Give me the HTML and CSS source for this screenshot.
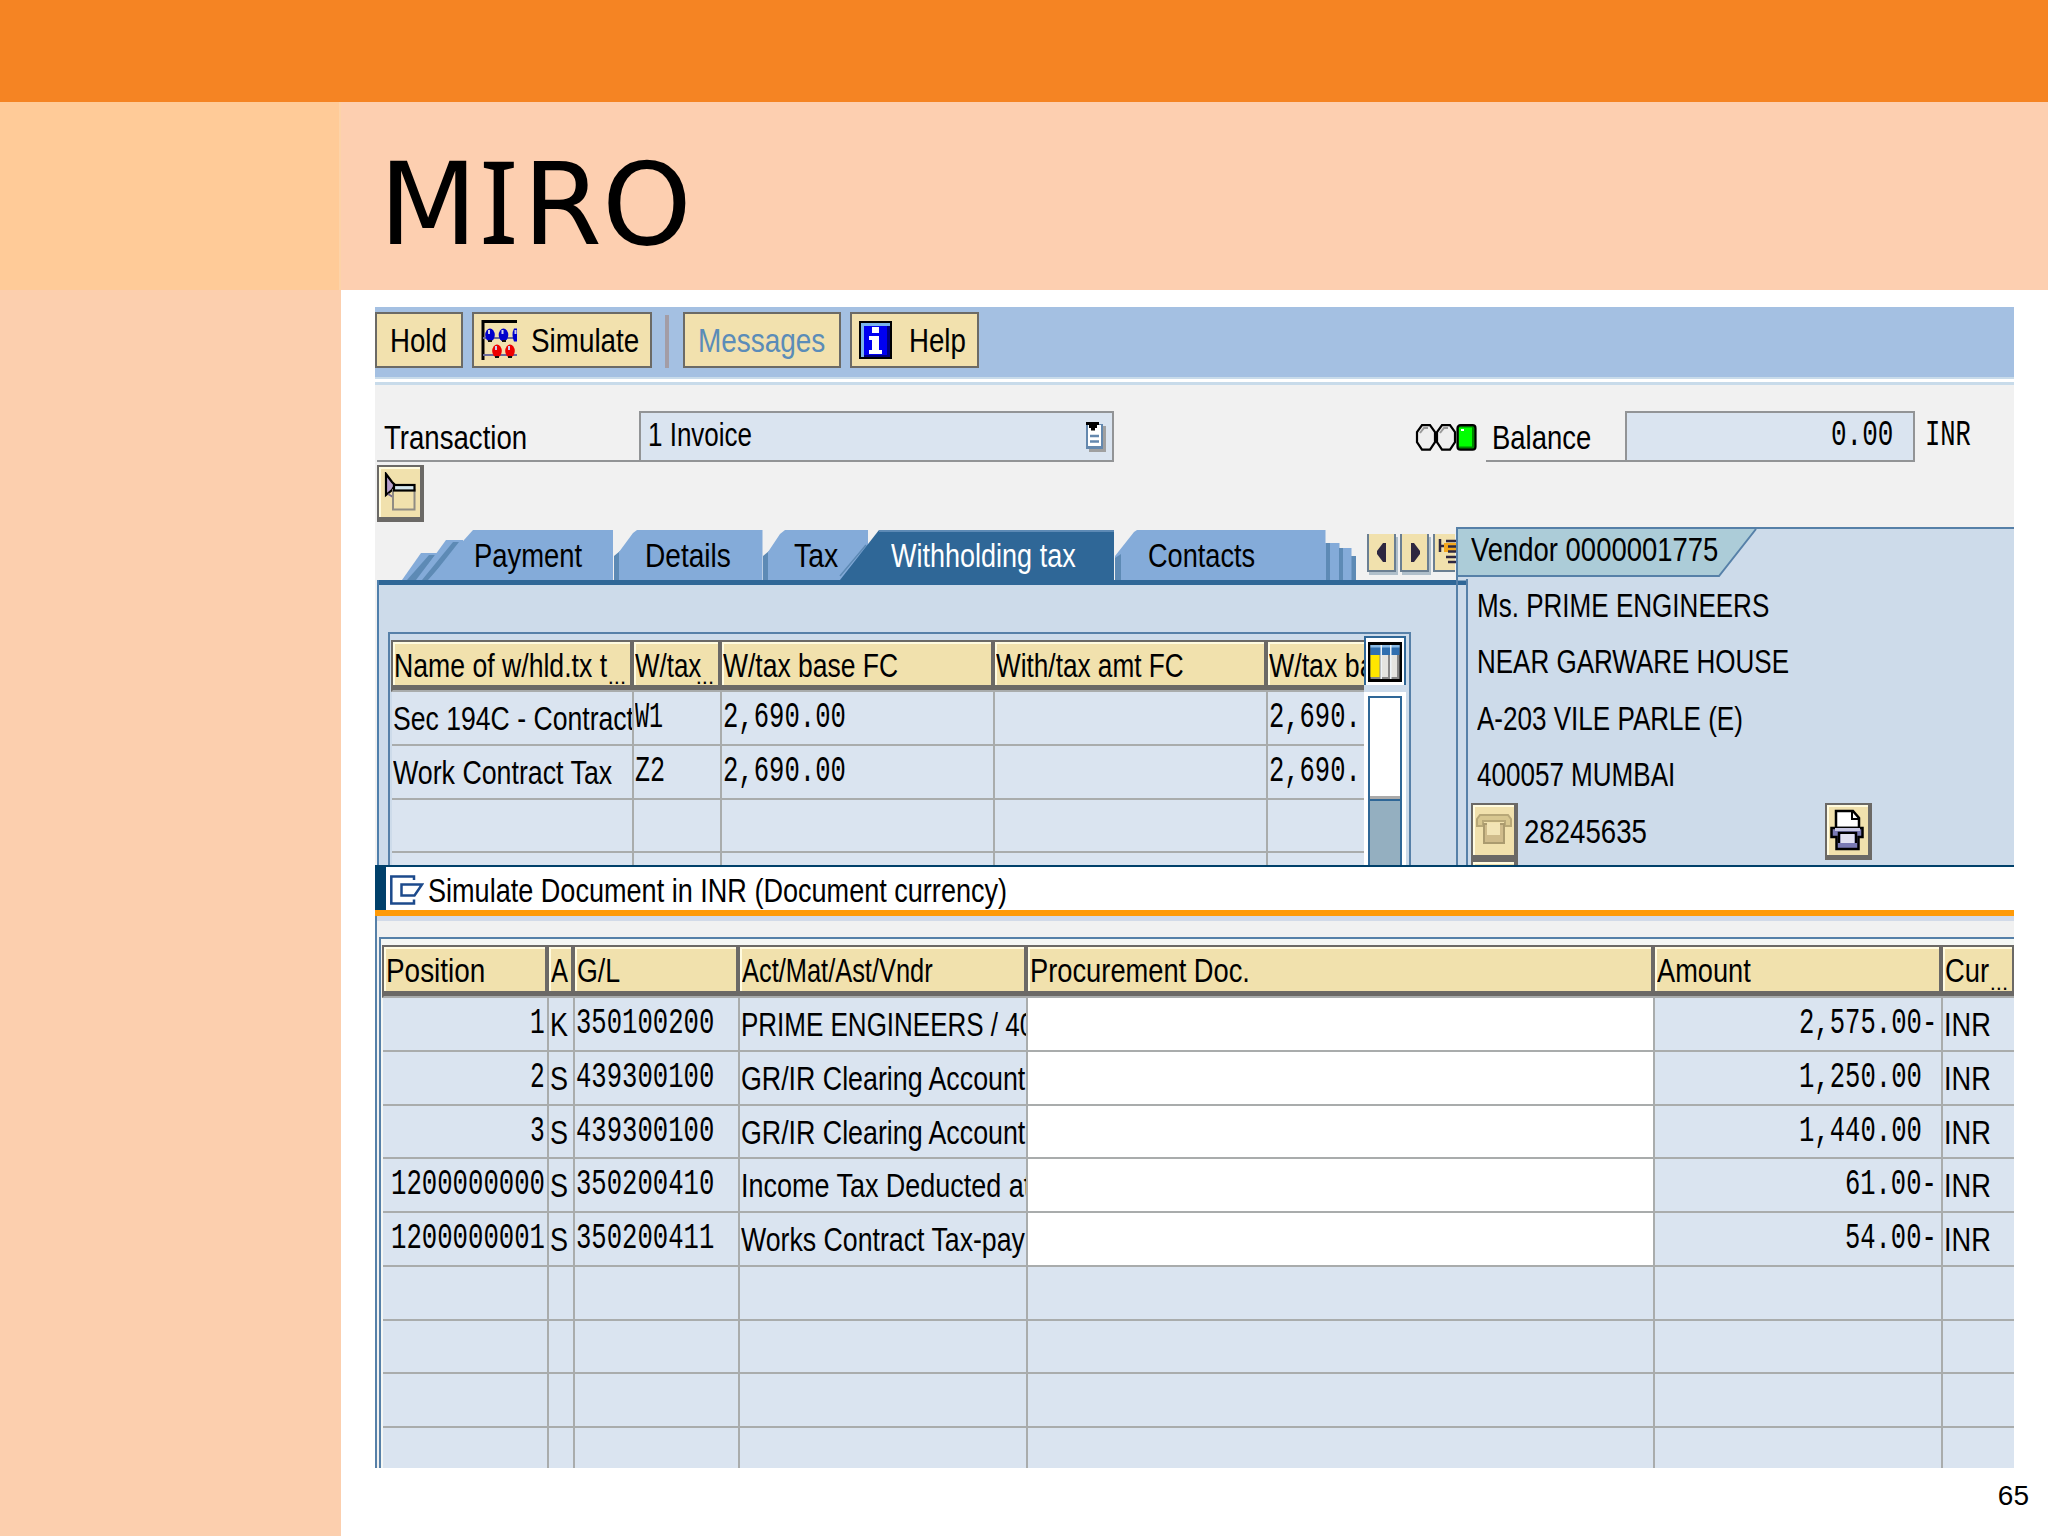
FILE: index.html
```html
<!DOCTYPE html>
<html lang="en">
<head>
  <meta charset="UTF-8" />
  <title>MIRO</title>
  <link rel="stylesheet" href="styles.css">
</head>
<body>
  <div class="slide">
    <div class="top-bar"></div>
    <aside class="side"><div class="side-top"></div></aside>
    <header class="title-band"><h1>M<span class="serif-i">I</span>RO</h1></header>

    <main class="content">
      <div class="app">
        <div class="toolbar">
          <button class="btn btn-hold"><span class="t" data-w="57">Hold</span></button>
          <button class="btn btn-simulate">
            <svg class="abacus" width="36" height="40" viewBox="0 0 36 40">
              <path d="M2 40V1.500H36" fill="none" stroke="#000" stroke-width="3"/>
              <path d="M2 18H36M2 35H36" stroke="#6a6a9a" stroke-width="2"/>
              <g fill="#00c"><ellipse cx="9" cy="15" rx="4.800" ry="6.500"/><ellipse cx="22.500" cy="15" rx="4.800" ry="6.500"/><path d="M36 8.500h-3q-3 6 0 13h3z"/></g>
              <g fill="#e00"><ellipse cx="16" cy="31" rx="4.800" ry="6.500"/><ellipse cx="29" cy="31" rx="4.800" ry="6.500"/></g>
              <path d="M7 10h2v4h-2zM20.500 10h2v4h-2zM33.500 10h2v4h-2zM14 26h2v4h-2zM27 26h2v4h-2z" fill="#cce"/>
              <path d="M7 20h4v2h-4zM21 20h4v2h-4zM14 36h4v2h-4zM27 36h4v2h-4z" fill="#111"/>
            </svg>
            <span class="t" data-w="108">Simulate</span>
          </button>
          <span class="sep"></span>
          <button class="btn btn-messages"><span class="t" data-w="127">Messages</span></button>
          <button class="btn btn-help">
            <svg width="33" height="38" viewBox="0 0 33 38">
              <path d="M0 0h33v38h-33z" fill="#000"/>
              <path d="M2 2h29v4h-25v30h-4z" fill="#7ab4ea"/>
              <path d="M5 5h23v29h-23z" fill="#0000f0"/>
              <path d="M28 5h3v31h-26v-2h23z" fill="#000080"/>
              <path d="M13 6h7v6h-7zM10 15h10v14h3v4h-13v-4h3v-10h-3z" fill="#fff"/>
            </svg>
            <span class="t" data-w="57">Help</span>
          </button>
        </div>

        <div class="form">
          <div class="field-row">
            <label class="lbl lbl-transaction"><span class="t" data-w="143">Transaction</span></label>
            <div class="field field-transaction">
              <span class="t" data-w="104">1 Invoice</span>
              <svg width="20" height="30" viewBox="0 0 20 30">
                <path d="M3 4h17v26h-17z" fill="#a0a0a0"/>
                <path d="M0 2h17v25h-17z" fill="#6488ae"/>
                <path d="M2 3h13v21h-13z" fill="#fff"/>
                <path d="M4 14h9M4 19.500h9" stroke="#6488ae" stroke-width="2.500"/>
                <path d="M0 0h13v3h-2v3h-2v2.500h-4v-2.500h-2v-3h-3z" fill="#000"/>
              </svg>
            </div>
            <svg class="lights" width="62" height="27" viewBox="0 0 62 27">
              <g fill="#eee" stroke="#000" stroke-width="2.200">
                <path d="M7 1.200h8l5 7v10l-5 7.500h-8l-5-7.500v-10z"/>
                <path d="M27 1.200h8l5 7v10l-5 7.500h-8l-5-7.500v-10z"/>
              </g>
              <path d="M5 9l4-5h4M25 9l4-5h4" fill="none" stroke="#999" stroke-width="2"/>
              <rect x="42.500" y="1.200" width="18" height="24.500" rx="3" fill="#080" stroke="#000" stroke-width="2.200"/>
              <path d="M44 3.500h13v19h-13z" fill="#0f0"/>
              <path d="M46 5h3v2h-3z" fill="#fff"/>
            </svg>
            <label class="lbl lbl-balance"><span class="t" data-w="99">Balance</span></label>
            <div class="field field-balance"><span class="m" data-w="62">0.00</span></div>
            <span class="m currency" data-w="46">INR</span>
          </div>
          <button class="icon-btn">
            <svg width="32" height="40" viewBox="0 0 32 40">
              <path d="M2 2l6 8 3 3-3 5-6 5z" fill="#b9a0cc" stroke="#000" stroke-width="2.200"/>
              <path d="M4 22l5 3v-7" fill="none" stroke="#76688e" stroke-width="2"/>
              <rect x="9" y="18" width="21.500" height="19.500" fill="none" stroke="#908c84" stroke-width="2"/>
              <rect x="10" y="13" width="20.500" height="5.500" fill="#d6e8f0" stroke="#000" stroke-width="2.200"/>
            </svg>
          </button>
        </div>

        <div class="middle">
          <section class="details">
            <div class="tabs">
              <svg class="tab-shapes" width="1081" height="53" viewBox="0 0 1081 53">
                <path d="M27 53L46 26H62V53z" fill="#84abd9"/>
                <path d="M32 53L54 28H60L41 53z" fill="#5d8ab5"/>
                <path d="M42 53L71 13H88V53z" fill="#84abd9"/>
                <path d="M47 53L78 15H84L54 53z" fill="#5d8ab5"/>
                <path d="M53 53L98 3H238V53z" fill="#84abd9"/>
                <path d="M239 53V29l6-5v29zM388 53V29l6-5v29z" fill="#5d8ab5"/>
                <path d="M244 53V25l14-19 4-3H387.500V53zM393 53V25l12-18 5-4H493V53z" fill="#84abd9"/>
                <path d="M465 49L491 18M467 53L494 20" stroke="#5d8ab5" stroke-width="1.500"/>
                <path d="M465 53L504 3H739V53z" fill="#2f6797"/>
                <path d="M504 4H739" stroke="#5d8ab5" stroke-width="2"/>
                <path d="M740 29l19-24 3-2H950.500V16h14v5h12v8H981V53H746V31l-6 5z" fill="#84abd9"/>
                <path d="M740 53V31l6-4v26z" fill="#5d8ab5"/>
                <path d="M951 16h4v37h-4zM964 21h4v32h-4zM976.500 29h4.500v24h-4.500z" fill="#5d8ab5"/>
              </svg>
              <span class="tab tab-payment"><span class="t" data-w="108">Payment</span></span>
              <span class="tab tab-details"><span class="t" data-w="86">Details</span></span>
              <span class="tab tab-tax"><span class="t" data-w="44">Tax</span></span>
              <span class="tab tab-wht"><span class="t" data-w="185">Withholding tax</span></span>
              <span class="tab tab-contacts"><span class="t" data-w="107">Contacts</span></span>
              <div class="tab-nav">
                <i><svg width="26" height="36"><path d="M17 9v19h-3l-6-8v-3l6-8z" fill="#2e2740"/></svg></i>
                <i><svg width="26" height="36"><path d="M9 9v19h3l6-8v-3l-6-8z" fill="#2e2740"/></svg></i>
                <i><svg width="21" height="36"><path d="M5 5v13M5 12h6" stroke="#2e2740" stroke-width="2.500"/><path d="M9 9h12v9h-12z" fill="#f5a81c"/><path d="M11 7h12M13 12.500h10M13 17.500h10M11 23h12M13 28h10" stroke="#2e2740" stroke-width="2.500"/></svg></i>
              </div>
            </div>
            <div class="panel">
              <div class="group">
                <div class="grid wht">
                  <div class="row head">
                    <div><span class="t" data-w="213">Name of w/hld.tx t</span><b>...</b></div>
                    <div><span class="t" data-w="66">W/tax</span><b>...</b></div>
                    <div><span class="t" data-w="175">W/tax base FC</span></div>
                    <div><span class="t" data-w="188">With/tax amt FC</span></div>
                    <div><span class="t" data-w="175">W/tax base LC</span></div>
                  </div>
                  <div class="row"><div><span class="t" data-w="241">Sec 194C - Contract</span></div><div><span class="m" data-w="28">W1</span></div><div><span class="m" data-w="123">2,690.00</span></div><div></div><div><span class="m" data-w="92">2,690.</span></div></div>
                  <div class="row"><div><span class="t" data-w="219">Work Contract Tax</span></div><div><span class="m" data-w="30">Z2</span></div><div><span class="m" data-w="123">2,690.00</span></div><div></div><div><span class="m" data-w="92">2,690.</span></div></div>
                  <div class="row"><div></div><div></div><div></div><div></div><div></div></div>
                  <div class="row"><div></div><div></div><div></div><div></div><div></div></div>
                </div>
                <div class="scroll-col">
                  <div class="config">
                    <svg width="34" height="40" viewBox="0 0 34 40">
                      <path d="M0 0h34v40h-34z" fill="#000"/>
                      <path d="M2.500 3h29v34h-29z" fill="#888"/>
                      <path d="M2.500 3h29v10h-29z" fill="#2f6fb0"/>
                      <path d="M2.500 3h29v2.500h-29z" fill="#8cbce6"/>
                      <path d="M2.500 13h9v22h-9z" fill="#ffe600"/>
                      <path d="M14 13h6v22h-6zM23 13h6v22h-6z" fill="#e4e4e0"/>
                      <path d="M12.500 3h1.500v34h-1.500zM22 3h1.500v34h-1.500z" fill="#eef4f8"/>
                    </svg>
                  </div>
                  <div class="scrollbar"><div class="thumb"></div></div>
                </div>
              </div>
            </div>
          </section>

          <section class="vendor">
            <div class="vendor-title">
              <svg width="305" height="60" viewBox="0 0 305 60"><path d="M0 53.500H8V58H0z" fill="#2f6797"/><path d="M0 2H298L261 48.500H0z" fill="#acccd8"/><path d="M0 49H261L298 2" fill="none" stroke="#5680a8" stroke-width="2"/></svg>
              <span class="t" data-w="247">Vendor 0000001775</span>
            </div>
            <div class="vendor-body">
              <p><span class="t" data-w="292">Ms. PRIME ENGINEERS</span></p>
              <p><span class="t" data-w="312">NEAR GARWARE HOUSE</span></p>
              <p><span class="t" data-w="266">A-203 VILE PARLE (E)</span></p>
              <p><span class="t" data-w="198">400057 MUMBAI</span></p>
              <div class="phone-row">
                <button class="icon-btn">
                  <svg width="36" height="40" viewBox="0 0 36 40">
                    <path d="M4 5h28l3 4v7h-6v-5h-22v5h-6v-7z" fill="#d8c790" stroke="#b8a878" stroke-width="2"/>
                    <path d="M8 14h20v19h-20z" fill="#cfbb8b" stroke="#ab9b6f" stroke-width="2"/>
                    <path d="M11 13h13v12h-13z" fill="#f2e4b6"/>
                  </svg>
                </button>
                <span class="t" data-w="123">28245635</span>
                <button class="icon-btn printer">
                  <svg width="36" height="44" viewBox="0 0 36 44">
                    <path d="M7 20V3h17l6 7v10z" fill="#fff" stroke="#000" stroke-width="2.500"/>
                    <path d="M23 3v8h7" fill="none" stroke="#000" stroke-width="2"/>
                    <path d="M2.500 20h31v9h-4v12h-22v-12h-5z" fill="#7a7ab4" stroke="#000" stroke-width="2.500"/>
                    <path d="M6 21.500h25" stroke="#c8c8e4" stroke-width="3"/>
                    <path d="M10 35V25h17v10" fill="none" stroke="#000" stroke-width="2.500"/>
                    <path d="M11.500 26h14v9h-14z" fill="#e2e2f2"/>
                  </svg>
                </button>
              </div>
              <div class="icon-btn next-btn"></div>
            </div>
          </section>
        </div>

        <div class="dialog-title">
          <svg width="34" height="30" viewBox="0 0 34 30">
            <path d="M24 5V1.500H1.300V28.500H24V24.500" fill="none" stroke="#1c4a8c" stroke-width="2.500"/>
            <path d="M11.500 9.500H32l-7.500 11H11.500z" fill="none" stroke="#1c4a8c" stroke-width="2.500"/>
          </svg>
          <span class="t" data-w="579">Simulate Document in INR (Document currency)</span>
        </div>

        <div class="dialog">
          <div class="grid sim">
            <div class="row head">
              <div><span class="t" data-w="99">Position</span></div>
              <div><span class="t" data-w="17">A</span></div>
              <div><span class="t" data-w="43">G/L</span></div>
              <div><span class="t" data-w="191">Act/Mat/Ast/Vndr</span></div>
              <div><span class="t" data-w="220">Procurement Doc.</span></div>
              <div><span class="t" data-w="94">Amount</span></div>
              <div><span class="t" data-w="44">Cur</span><b>...</b></div>
            </div>
            <div class="row item"><div><span class="m" data-w="15">1</span></div><div><span class="t" data-w="18">K</span></div><div><span class="m" data-w="138">350100200</span></div><div><span class="t" data-w="293">PRIME ENGINEERS / 40</span></div><div></div><div><span class="m" data-w="138">2,575.00-</span></div><div><span class="t" data-w="47">INR</span></div></div>
            <div class="row item"><div><span class="m" data-w="15">2</span></div><div><span class="t" data-w="18">S</span></div><div><span class="m" data-w="138">439300100</span></div><div><span class="t" data-w="284">GR/IR Clearing Account</span></div><div></div><div><span class="m" data-w="138">1,250.00 </span></div><div><span class="t" data-w="47">INR</span></div></div>
            <div class="row item"><div><span class="m" data-w="15">3</span></div><div><span class="t" data-w="18">S</span></div><div><span class="m" data-w="138">439300100</span></div><div><span class="t" data-w="284">GR/IR Clearing Account</span></div><div></div><div><span class="m" data-w="138">1,440.00 </span></div><div><span class="t" data-w="47">INR</span></div></div>
            <div class="row item"><div><span class="m" data-w="154">1200000000</span></div><div><span class="t" data-w="18">S</span></div><div><span class="m" data-w="138">350200410</span></div><div><span class="t" data-w="290">Income Tax Deducted at</span></div><div></div><div><span class="m" data-w="92">61.00-</span></div><div><span class="t" data-w="47">INR</span></div></div>
            <div class="row item"><div><span class="m" data-w="154">1200000001</span></div><div><span class="t" data-w="18">S</span></div><div><span class="m" data-w="138">350200411</span></div><div><span class="t" data-w="284">Works Contract Tax-pay</span></div><div></div><div><span class="m" data-w="92">54.00-</span></div><div><span class="t" data-w="47">INR</span></div></div>
            <div class="row"><div></div><div></div><div></div><div></div><div></div><div></div><div></div></div>
            <div class="row"><div></div><div></div><div></div><div></div><div></div><div></div><div></div></div>
            <div class="row"><div></div><div></div><div></div><div></div><div></div><div></div><div></div></div>
            <div class="row"><div></div><div></div><div></div><div></div><div></div><div></div><div></div></div>
          </div>
        </div>
      </div>
      <footer>65</footer>
    </main>
  </div>

  <script>
    // squeeze each label to its narrow GUI width
    document.querySelectorAll("[data-w]").forEach(el => {
      const natural = el.offsetWidth;
      const width = Number(el.dataset.w);
      el.style.transform = `scaleX(${width / natural})`;
      el.style.marginRight = (width - natural) + "px";
    });
  </script>
</body>
</html>
```
FILE: styles.css
```css
* {
  box-sizing: border-box;
}

body {
  margin: 0;
  background: #fff;
  font-family: "Liberation Sans", Arial, sans-serif;
  color: #000;
}

.slide {
  width: 2048px;
  height: 1536px;
  display: grid;
  grid-template-columns: 341px 1fr;
  grid-template-rows: 102px 188px 1fr;
  overflow: hidden;
}

.top-bar {
  grid-column: 1 / 3;
  background: #f58423;
}

.side {
  grid-row: 2 / 4;
  background: #fccfae;
}

.side-top {
  height: 188px;
  background: #ffcb98;
  border-right: 2px solid #fdd3a8;
}

.title-band {
  background: #fdcfb0;
  padding-left: 38px;
}

h1 {
  margin: 0;
  padding-top: 37px;
  font: 400 114px/132px "DejaVu Sans", Verdana, sans-serif;
}

.serif-i {
  font-family: "Noto Sans", sans-serif;
  font-size: 116px;
  line-height: 1px;
  margin: 0 4px 0 2px;
}

.content {
  padding: 17px 0 0 34px;
}

.app {
  width: 1639px;
  height: 1161px;
  overflow: hidden;
  background: #f1f1f1;
  display: flex;
  flex-direction: column;
}

/* text */
.t, .m {
  display: inline-block;
  flex: none;
  white-space: pre;
  transform-origin: 0 0;
  font-size: 33px;
  line-height: 37px;
}

.m {
  font-family: "Liberation Mono", monospace;
  font-size: 36px;
}

/* toolbar */
.toolbar {
  flex: none;
  height: 78px;
  display: flex;
  align-items: flex-start;
  padding-top: 5px;
  background: linear-gradient(#a4c0e2 70px, #c8dbea 70px 72px, #fff 72px 75px, #c8dbea 75px);
}

.btn {
  height: 56px;
  display: flex;
  align-items: center;
  padding: 0;
  border: 2px solid #6b6a66;
  background: #f2e1ae;
  color: #000;
  font-family: inherit;
}

.btn-hold {
  width: 88px;
  padding-left: 13px;
  margin-right: 9px;
}

.btn-simulate {
  width: 180px;
  padding-left: 7px;
}

.btn-simulate .t {
  margin-left: 14px;
}

.sep {
  width: 4px;
  height: 53px;
  margin: 3px 14px 0 13px;
  background: #a39da6;
}

.btn-messages {
  width: 158px;
  padding-left: 13px;
  margin-right: 9px;
  color: #5b8cb8;
}

.btn-help {
  width: 129px;
  padding-left: 7px;
}

.btn-help .t {
  margin-left: 17px;
}

/* header fields */
.form {
  flex: none;
  height: 142px;
  padding: 26px 0 0 2px;
}

.field-row {
  display: flex;
  height: 51px;
}

.lbl {
  border-bottom: 2px solid #929496;
  padding-top: 8px;
}

.lbl-transaction {
  width: 262px;
  padding-left: 7px;
}

.field {
  border: 2px solid #929496;
  background: #dae4f0;
  display: flex;
  padding-top: 3px;
}

.field-transaction {
  width: 475px;
  padding-left: 7px;
  justify-content: space-between;
  padding-right: 6px;
}

.field-transaction svg {
  margin-top: 6px;
}

.lights {
  margin: 13px 9px 0 301px;
}

.lbl-balance {
  width: 139px;
  padding-left: 6px;
}

.field-balance {
  width: 290px;
  padding-top: 4px;
  justify-content: flex-end;
  padding-right: 20px;
}

.currency {
  margin-left: 10px;
  margin-top: 6px;
}

.icon-btn {
  display: flex;
  align-items: center;
  justify-content: center;
  width: 47px;
  height: 57px;
  margin-top: 3px;
  padding: 0;
  border: solid #6b6966;
  border-width: 2px 4px 5px 2px;
  background: #f1e1ad;
  box-shadow: inset 2px 2px #fffbe0;
}

/* tabs */
.middle {
  flex: none;
  display: flex;
  height: 338px;
  overflow: hidden;
}

.details {
  width: 1081px;
}

.tabs {
  position: relative;
  height: 53px;
  display: flex;
}

.tab-shapes {
  position: absolute;
  left: 0;
  top: 0;
}

.tab {
  position: relative;
  padding-top: 10px;
}

.tab-payment {
  width: 171px;
  margin-left: 99px;
}

.tab-details {
  width: 149px;
}

.tab-tax {
  width: 97px;
}

.tab-wht {
  width: 257px;
  color: #fff;
}

.tab-contacts {
  width: 219px;
}

.tab-nav {
  display: flex;
  gap: 4px;
  margin-top: 7px;
}

.tab-nav i {
  width: 29px;
  height: 38px;
  background: #f1e1ad;
  border: solid #6b7f92;
  border-width: 0 2px 2px 2px;
  box-shadow: 2px 3px #b0bfca;
}

.tab-nav i:last-child {
  width: 22px;
  border-right: 0;
  box-shadow: none;
}

.panel {
  height: 285px;
  margin-left: 2px;
  border-left: 2px solid #4f7fac;
  background: linear-gradient(#2f6797 5px, #cddbea 5px);
  padding: 52px 0 0 9px;
}

.group {
  width: 1023px;
  height: 240px;
  border: solid #5680a8;
  border-width: 2px 2px 0 2px;
  display: flex;
  padding: 6px 0 0 1px;
}

/* tables */
.grid {
  overflow: hidden;
}

.row {
  display: grid;
  height: 53.75px;
  padding-left: 1px;
}

.row div {
  overflow: hidden;
  white-space: nowrap;
  padding: 8px 0 0 1px;
  background: #dae4f0;
  border: solid #a9acac;
  border-width: 0 2px 2px 0;
}

.row .m {
  margin-top: -1px;
}

.row.head {
  height: 52px;
  padding-left: 0;
  border: solid #6b6966;
  border-width: 2px 0 0 2px;
  border-bottom: 2px solid #a9acac;
}

.row.head div {
  position: relative;
  background: #f1e1ad;
  border: solid #6b6966;
  border-width: 0 4px 5px 0;
  box-shadow: inset 2px 2px #fffbe0;
  padding: 5px 0 0 2px;
}

.row.head b {
  position: absolute;
  right: 4px;
  bottom: -2px;
  font: 400 22px/20px "Liberation Sans", sans-serif;
}

.wht {
  width: 973px;
}

.wht .row {
  grid-template-columns: 242px 88px 273px 273px 96px;
}

.wht .row.head {
  grid-template-columns: 241px 88px 273px 273px 96px;
}

.wht .row.head div {
  padding-left: 1px;
}

.wht .row div:last-child {
  border-right: 0;
}

.scroll-col {
  width: 42px;
  margin-top: -4px;
}

.config {
  height: 49px;
  border: solid #2f6797;
  border-width: 2px 2px 0 2px;
  background: #fff;
  padding: 4px 0 0 2px;
}

.scrollbar {
  height: 180px;
  margin-top: 7px;
  border: solid #fff;
  border-width: 4px 4px 0 4px;
  background: #94afc0;
}

.thumb {
  height: 180px;
  border: 2px solid #2f6797;
  background: linear-gradient(#fff 98px, #aaa 98px 101px, #2f6797 101px 103px, #94afc0 103px);
}

/* vendor */
.vendor {
  width: 558px;
  border-top: 2px solid #5680a8;
  border-left: 2px solid #5680a8;
  background: #cddbea;
}

.vendor-title {
  position: relative;
  height: 50px;
  padding: 2px 0 0 13px;
}

.vendor-title svg {
  position: absolute;
  left: 0;
  top: -2px;
}

.vendor-title .t {
  position: relative;
}

.vendor-body {
  height: 290px;
  margin-left: 8px;
  border-left: 2px solid #5680a8;
  padding: 8px 0 0 3px;
}

.vendor-body p {
  height: 56.4px;
  margin: 0;
  padding-left: 6px;
}

.phone-row {
  display: flex;
  margin-top: -12px;
}

.phone-row .icon-btn {
  margin-top: 2px;
}

.phone-row .t {
  margin: 12px 0 0 6px;
}

.phone-row .printer {
  margin-left: 178px;
}

.next-btn {
  margin-top: 0;
}

/* simulate dialog */
.dialog-title {
  flex: none;
  height: 51px;
  display: flex;
  border-bottom: 6px solid #ff9a08;
  background: linear-gradient(#00406a 2px, transparent 2px), linear-gradient(90deg, #00406a 11px, #fff 11px);
  padding: 7px 0 0 15px;
}

.dialog-title svg {
  margin: 3px 4px 0 0;
}

.dialog {
  flex: 1;
  border-left: 2px solid #5680a8;
  padding: 21px 0 0 2px;
  background: linear-gradient(#d2dae8 5px, #f1f1f1 5px);
}

.dialog .grid {
  border-top: 2px solid #5680a8;
  border-left: 2px solid #5680a8;
  padding: 6px 0 0 1px;
  background: #f4f7f4;
}

.sim .row {
  grid-template-columns: 166px 26px 165px 288px 627px 288px 71px;
}

.sim .row.head {
  height: 53px;
  grid-template-columns: 165px 26px 165px 288px 627px 288px 71px;
}

.sim .head div:last-child {
  border-right-width: 2px;
}

.sim .row:not(.head) div:last-child {
  border-right: 0;
}

.sim .item div:nth-child(1) {
  text-align: right;
  padding-right: 2px;
}

.sim .item div:nth-child(5) {
  background: #fff;
}

.sim .item div:nth-child(6) {
  text-align: right;
  padding-right: 4px;
}

footer {
  margin-top: 12px;
  padding-right: 19px;
  text-align: right;
  font-size: 28px;
  line-height: 32px;
}
```
